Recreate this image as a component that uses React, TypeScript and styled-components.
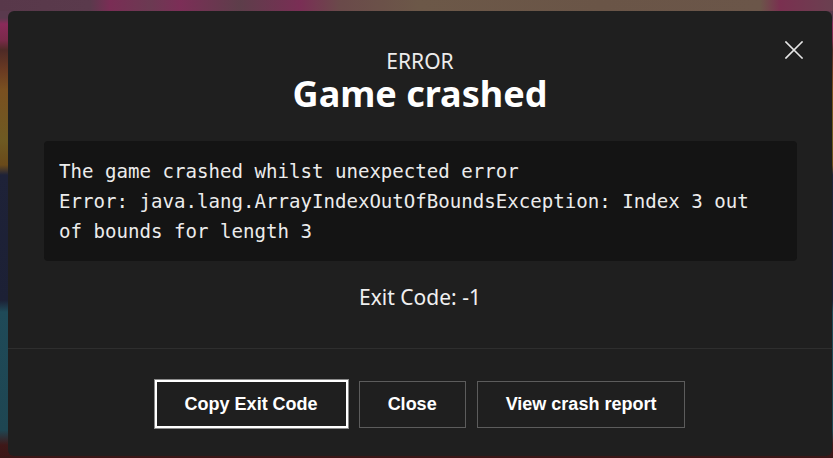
import React from "react";
import styled, { createGlobalStyle } from "styled-components";

const GlobalStyle = createGlobalStyle`
  html, body {
    margin: 0;
    padding: 0;
    width: 833px;
    height: 458px;
    overflow: hidden;
  }
  body {
    background:
      linear-gradient(to right,
        #58384a 0px, #5a3a4c 90px, #7a2d55 110px, #6b3a52 150px, #7c2e57 180px,
        #5d3e4a 240px, #7a2e55 300px, #6a4a4a 340px, #6c5848 420px,
        #6a5547 600px, #6b5649 760px, #7a3050 780px, #6a4050 833px)
        top left / 100% 11px no-repeat,
      linear-gradient(to bottom,
        #5a3a4e 0px, #5a3a4e 18px, #8a2a5a 24px, #7a2a4a 40px, #4e2a26 50px,
        #6a3a22 70px, #7a5020 90px, #6e5a22 140px, #6a4a1a 165px,
        #1e2238 175px, #1c2035 300px, #1f4a58 312px, #1e4652 430px,
        #3e1818 445px, #3a1616 458px);
    font-family: "Noto Sans", "Open Sans", sans-serif;
  }
`;

const Modal = styled.div`
  position: relative;
  box-sizing: border-box;
  margin: 11px 0 0 8px;
  width: 824px;
  height: 445px;
  background: #1f1f1f;
  border-radius: 6px;
  display: flex;
  flex-direction: column;
  align-items: stretch;
  padding-top: 40px;
  color: #f2f2f2;
`;

const CloseIcon = styled.button`
  position: absolute;
  top: 30px;
  right: 29px;
  width: 18px;
  height: 18px;
  padding: 0;
  border: none;
  background: transparent;
  display: flex;
  cursor: pointer;
`;

const Overline = styled.div`
  text-align: center;
  font-family: "Noto Sans", "Open Sans", sans-serif;
  font-size: 21px;
  line-height: 20px;
  color: #ececec;
`;

const Title = styled.h1`
  margin: 5px 0 0 0;
  text-align: center;
  font-family: "Noto Sans", "Open Sans", sans-serif;
  font-weight: 700;
  font-size: 36px;
  line-height: 36px;
  color: #ffffff;
`;

const CodeBox = styled.pre`
  margin: 29px 35px 0 36px;
  padding: 16px 20px 14px 15px;
  background: #141414;
  border-radius: 4px;
  font-family: "DejaVu Sans Mono", "Liberation Mono", monospace;
  font-size: 19.1px;
  line-height: 30px;
  color: #ececec;
  white-space: pre-wrap;
  word-break: normal;
`;

const ExitCode = styled.div`
  margin-top: 22px;
  text-align: center;
  font-family: "Noto Sans", "Open Sans", sans-serif;
  font-size: 21px;
  line-height: 28px;
  color: #f0f0f0;
`;

const Divider = styled.hr`
  margin: 37px 0 0 0;
  border: none;
  height: 1px;
  background: #2e2e2e;
`;

const Footer = styled.div`
  display: flex;
  justify-content: center;
  align-items: center;
  gap: 11px;
  padding-top: 31px;
`;

const Button = styled.button<{ $focused?: boolean }>`
  box-sizing: border-box;
  height: ${(p) => (p.$focused ? "48px" : "47px")};
  padding: 0 28px;
  background: #1f1f1f;
  color: #ffffff;
  font-family: "Liberation Sans", Arial, sans-serif;
  font-weight: 700;
  font-size: 18px;
  border: ${(p) => (p.$focused ? "2px solid #ffffff" : "1px solid #5c5c5c")};
  box-shadow: ${(p) => (p.$focused ? "0 0 0 1px #8a8a8a" : "none")};
  border-radius: 0;
  cursor: pointer;
`;

export default function App() {
  return (
    <>
      <GlobalStyle />
      <Modal>
        <CloseIcon aria-label="Close">
          <svg width="18" height="18" viewBox="0 0 18 18">
            <path
              d="M1 1 L17 17 M17 1 L1 17"
              stroke="#e6e6e6"
              strokeWidth="1.6"
              strokeLinecap="square"
            />
          </svg>
        </CloseIcon>
        <Overline>ERROR</Overline>
        <Title>Game crashed</Title>
        <CodeBox>
          {"The game crashed whilst unexpected error\nError: java.lang.ArrayIndexOutOfBoundsException: Index 3 out of bounds for length 3"}
        </CodeBox>
        <ExitCode>Exit Code: -1</ExitCode>
        <Divider />
        <Footer>
          <Button $focused>Copy Exit Code</Button>
          <Button>Close</Button>
          <Button>View crash report</Button>
        </Footer>
      </Modal>
    </>
  );
}
